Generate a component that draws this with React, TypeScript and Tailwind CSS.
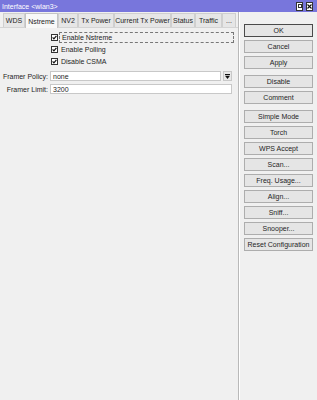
const tabs = [
  { label: "WDS", w: "w-[22px]" },
  { label: "Nstreme", w: "w-[33px]", active: true },
  { label: "NV2", w: "w-[20px]" },
  { label: "Tx Power", w: "w-[36px]" },
  { label: "Current Tx Power", w: "w-[57px]" },
  { label: "Status", w: "w-[24px]" },
  { label: "Traffic", w: "w-[27px]" },
  { label: "...", w: "w-[14px]" },
]

const CheckBox = () => (
  <svg width="7" height="7" viewBox="0 0 7 7" className="shrink-0">
    <rect x="0.5" y="0.5" width="6" height="6" fill="#fff" stroke="#333" />
    <path d="M1.6 3.4 L2.9 4.8 L5.4 1.8" fill="none" stroke="#111" strokeWidth="1.2" />
  </svg>
)

const Btn = ({ label, primary, className = "" }: { label: string; primary?: boolean; className?: string }) => (
  <div
    className={`h-[13px] w-[69px] flex items-center justify-center bg-[#e5e5e5] text-[7px] text-[#1e1e1e] border ${
      primary ? "border-[#4a4a4a]" : "border-[#adadad]"
    } ${className}`}
  >
    {label}
  </div>
)

export default function App() {
  return (
    <div className="w-[317px] h-[400px] bg-[#f0f0f0] flex flex-col overflow-hidden font-['Liberation_Sans',Arial,sans-serif] leading-none">
      {/* title bar */}
      <div className="h-[12px] bg-[#7876dc] flex items-center justify-between pl-[2px] pr-[4px]">
        <span className="text-[7px] text-white">Interface &lt;wlan3&gt;</span>
        <div className="flex gap-[3px] items-center">
          <div className="w-[7px] h-[9px] bg-white border border-[#333] flex items-center justify-center">
            <div className="w-[4px] h-[4px] border border-[#333]" />
          </div>
          <div className="w-[7px] h-[9px] bg-white border border-[#333] flex items-center justify-center">
            <svg width="5" height="5" viewBox="0 0 5 5">
              <path d="M0.5 0.5 L4.5 4.5 M4.5 0.5 L0.5 4.5" stroke="#111" strokeWidth="1.1" />
            </svg>
          </div>
        </div>
      </div>

      <div className="flex flex-1">
        {/* left panel */}
        <div className="w-[238px] flex flex-col">
          <div className="h-[16px] flex items-end pl-[3px] border-b border-[#d4d4d4]">
            {tabs.map((t) => (
              <div
                key={t.label}
                className={`${t.w} flex items-center justify-center text-[7px] text-[#1e1e1e] border border-b-0 ${
                  t.active
                    ? "h-[15px] bg-[#f8f8f8] border-[#c4c4c4] -mb-px"
                    : "h-[14px] bg-[#e6e6e6] border-[#cfcfcf]"
                }`}
              >
                {t.label}
              </div>
            ))}
          </div>

          <div className="flex flex-col pt-[4px] text-[7px] text-[#1e1e1e]">
            <div className="h-[11px] flex items-center pl-[51px] gap-[1px]">
              <CheckBox />
              <div className="w-[175px] h-[11px] flex items-center pl-[2px] border border-dashed border-[#777]">
                Enable Nstreme
              </div>
            </div>
            <div className="h-[11px] mt-[1px] flex items-center pl-[51px] gap-[3px]">
              <CheckBox />
              <span>Enable Polling</span>
            </div>
            <div className="h-[11px] mt-[1px] flex items-center pl-[51px] gap-[3px]">
              <CheckBox />
              <span>Disable CSMA</span>
            </div>

            <div className="h-[10px] mt-[4px] flex items-center">
              <span className="w-[48px] text-right">Framer Policy:</span>
              <div className="ml-[2px] w-[171px] h-[10px] bg-white border border-[#c8c8c8] flex items-center pl-[2px]">
                none
              </div>
              <div className="ml-[2px] w-[9px] h-[10px] bg-[#e8e8e8] border border-[#c8c8c8] flex items-center justify-center">
                <svg width="5" height="5" viewBox="0 0 5 5">
                  <rect x="0" y="0" width="5" height="1" fill="#111" />
                  <path d="M0 1.8 L5 1.8 L2.5 5 Z" fill="#111" />
                </svg>
              </div>
            </div>
            <div className="h-[10px] mt-[3px] flex items-center">
              <span className="w-[48px] text-right">Framer Limit:</span>
              <div className="ml-[2px] w-[182px] h-[10px] bg-white border border-[#c8c8c8] flex items-center pl-[2px]">
                3200
              </div>
            </div>
          </div>
        </div>

        <div className="w-px bg-[#b9b9b9]" />
        <div className="w-px bg-white" />

        {/* right buttons */}
        <div className="flex flex-col pl-[4px] pt-[12px] gap-[3px]">
          <Btn label="OK" primary />
          <Btn label="Cancel" />
          <Btn label="Apply" />
          <Btn label="Disable" className="mt-[3px]" />
          <Btn label="Comment" />
          <Btn label="Simple Mode" className="mt-[3px]" />
          <Btn label="Torch" />
          <Btn label="WPS Accept" />
          <Btn label="Scan..." />
          <Btn label="Freq. Usage..." />
          <Btn label="Align..." />
          <Btn label="Sniff..." />
          <Btn label="Snooper..." />
          <Btn label="Reset Configuration" />
        </div>
      </div>
    </div>
  )
}
